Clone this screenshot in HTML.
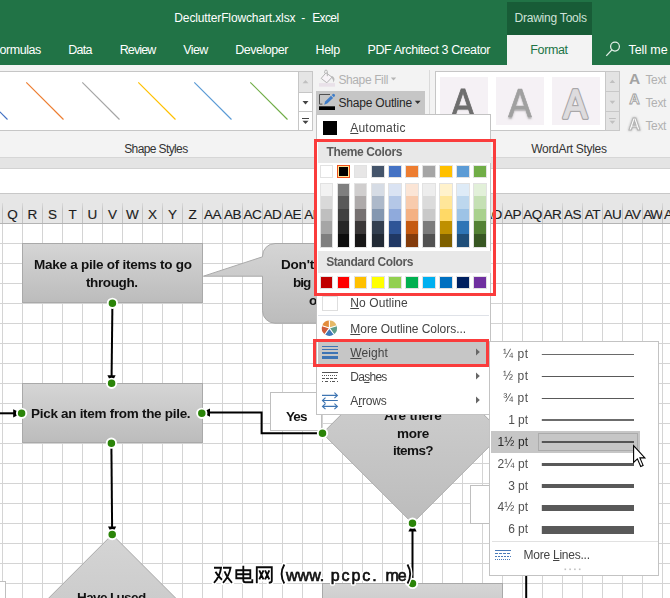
<!DOCTYPE html>
<html>
<head>
<meta charset="utf-8">
<style>
*{box-sizing:border-box;margin:0;padding:0}
html,body{width:670px;height:598px;overflow:hidden;background:#fff}
body{font-family:"Liberation Sans",sans-serif;font-size:12px;color:#262626;position:relative}
.a{position:absolute}
.t{position:absolute;white-space:nowrap;line-height:1}
svg{position:absolute;overflow:visible}
</style>
</head>
<body>
<div class="a" style="left:0px;top:0px;width:670px;height:65px;background:#217346;"></div>
<div class="a" style="left:0px;top:65px;width:670px;height:92px;background:#f3f3f3;"></div>
<div class="a" style="left:0px;top:157px;width:670px;height:11px;background:#e4e4e4;border-top:1px solid #d6d6d6;"></div>
<div class="a" style="left:0px;top:168px;width:670px;height:25px;background:#fff;border-top:1px solid #d2d2d2;"></div>
<div class="a" style="left:0px;top:193px;width:670px;height:31px;background:#e6e6e6;border-top:1px solid #c8c8c8;border-bottom:1px solid #b4b4b4;"></div>
<div class="a" style="left:0px;top:224px;width:670px;height:374px;background:#fff;background-image:linear-gradient(to right,#d4d4d4 1px,transparent 1px),linear-gradient(to bottom,#d4d4d4 1px,transparent 1px);background-size:20px 20px;background-position:2px -1px;"></div>
<div class="t" style="top:12.00px;font-size:12px;color:#fff;letter-spacing:-0.127px;left:174.30px;">DeclutterFlowchart.xlsx</div>
<div class="t" style="top:12.00px;font-size:12px;color:#fff;left:301.20px;">-</div>
<div class="t" style="top:12.00px;font-size:12px;color:#fff;letter-spacing:-0.609px;left:312.20px;">Excel</div>
<div class="a" style="left:507px;top:2px;width:85px;height:33px;background:#185c37;"></div>
<div class="t" style="top:12.00px;font-size:12px;color:#cfe2d7;letter-spacing:-0.220px;left:514.50px;">Drawing Tools</div>
<div class="a" style="left:507px;top:35px;width:85px;height:30px;background:#f3f3f3;"></div>
<div class="t" style="top:43.75px;font-size:12.5px;color:#217346;letter-spacing:-0.366px;left:530.30px;">Format</div>
<div class="t" style="top:43.75px;font-size:12.5px;color:#fff;letter-spacing:-0.438px;left:-0.50px;">ormulas</div>
<div class="t" style="top:43.75px;font-size:12.5px;color:#fff;letter-spacing:-0.702px;left:68.20px;">Data</div>
<div class="t" style="top:43.75px;font-size:12.5px;color:#fff;letter-spacing:-0.867px;left:119.70px;">Review</div>
<div class="t" style="top:43.75px;font-size:12.5px;color:#fff;letter-spacing:-0.644px;left:183.30px;">View</div>
<div class="t" style="top:43.75px;font-size:12.5px;color:#fff;letter-spacing:-0.476px;left:235.20px;">Developer</div>
<div class="t" style="top:43.75px;font-size:12.5px;color:#fff;letter-spacing:-0.305px;left:315.50px;">Help</div>
<div class="t" style="top:43.75px;font-size:12.5px;color:#fff;letter-spacing:-0.413px;left:367.50px;">PDF Architect 3 Creator</div>
<div class="t" style="top:43.75px;font-size:12.5px;color:#fff;letter-spacing:-0.099px;left:628.60px;">Tell me</div>
<svg style="left:603px;top:36px" width="20" height="22"><circle cx="12" cy="10.6" r="4.4" fill="none" stroke="#e3efe8" stroke-width="1.25"/><path d="M8.9 13.9L3.3 19.9" stroke="#e3efe8" stroke-width="1.3" fill="none"/></svg>
<div class="a" style="left:-5px;top:71px;width:304px;height:60px;background:#fff;border:1px solid #c6c6c6;"></div>
<svg style="left:0;top:0" width="320" height="135"><path d="M-29.7 82.3L7.5 119.5" stroke="#4472c4" stroke-width="1.15" fill="none"/><path d="M26.3 82.3L63.5 119.5" stroke="#ed7d31" stroke-width="1.15" fill="none"/><path d="M82.3 82.3L119.5 119.5" stroke="#a5a5a5" stroke-width="1.15" fill="none"/><path d="M138.3 82.3L175.5 119.5" stroke="#ffc000" stroke-width="1.15" fill="none"/><path d="M194.3 82.3L231.5 119.5" stroke="#5b9bd5" stroke-width="1.15" fill="none"/><path d="M250.3 82.3L287.5 119.5" stroke="#70ad47" stroke-width="1.15" fill="none"/></svg>
<div class="a" style="left:298px;top:71px;width:15px;height:22px;background:#e5e5e5;border:1px solid #c6c6c6;"></div>
<div class="a" style="left:298px;top:92px;width:15px;height:20px;background:#fff;border:1px solid #c6c6c6;"></div>
<div class="a" style="left:298px;top:111px;width:15px;height:20px;background:#fff;border:1px solid #c6c6c6;"></div>
<svg style="left:298px;top:71px" width="15" height="60"><path d="M4.6 12.3L7.5 9L10.4 12.3Z" fill="#c0c0c0"/><path d="M4.5 30L7.5 33.4L10.5 30Z" fill="#444"/><path d="M4 47.5H11" stroke="#444" stroke-width="1"/><path d="M4.5 49.7L7.5 53.1L10.5 49.7Z" fill="#444"/></svg>
<div class="t" style="top:143.00px;font-size:12px;color:#333;letter-spacing:-0.610px;left:124.20px;">Shape Styles</div>
<div class="t" style="top:74.00px;font-size:12px;color:#b1b1b1;letter-spacing:-0.377px;left:338.40px;">Shape Fill</div>
<svg style="left:316px;top:68px" width="22" height="20"><path d="M5.2 10.4L10 4.8L16 9.2L10.8 14.8Z" fill="#f8f4f8" stroke="#b4b4b4" stroke-width="1"/><path d="M8.7 5.2V3.4a1.3 1.3 0 0 1 2.6 0V8.2" stroke="#b4b4b4" stroke-width="1" fill="none"/><path d="M15.6 8C18.6 8.6 19.4 12 17.3 14.4C17.3 12 16.6 10.6 15 9.6Z" fill="#b9b9b9"/><rect x="3" y="15.1" width="16" height="3.6" fill="#e9e1e9"/></svg>
<svg style="left:390px;top:76px" width="8" height="6"><path d="M0.8 1.5L3.5 4.6L6.2 1.5Z" fill="#b5b5b5"/></svg>
<div class="a" style="left:316px;top:91px;width:109px;height:23px;background:#c6c6c6;"></div>
<div class="t" style="top:97.00px;font-size:12px;color:#262626;letter-spacing:-0.189px;left:338.40px;">Shape Outline</div>
<svg style="left:414px;top:99px" width="8" height="6"><path d="M0.8 1.7L3.7 5L6.6 1.7Z" fill="#333"/></svg>
<svg style="left:316px;top:91px" width="22" height="22"><path d="M14 3.5H3.5V13.1H6.4" stroke="#505050" stroke-width="1" fill="none"/><path d="M8.2 13.7L9.15 10.43L15 4.75L17.1 6.9L11.25 12.57Z" fill="#3f7dc9"/><path d="M15.7 4.05L16.6 3.2a1.5 1.5 0 0 1 2.1 2.1L17.8 6.2Z" fill="#3f7dc9"/><rect x="3" y="15.3" width="16" height="3.7" fill="#000"/></svg>
<div class="a" style="left:429px;top:70px;width:1px;height:84px;background:#dadada;"></div>
<div class="a" style="left:435px;top:71px;width:171px;height:60px;background:#fff;border:1px solid #c6c6c6;"></div>
<div class="a" style="left:440px;top:77px;width:48px;height:48px;background:#f5f1f5;"></div>
<div class="a" style="left:496px;top:77px;width:48px;height:48px;background:#f5f1f5;"></div>
<div class="a" style="left:552px;top:77px;width:48px;height:48px;background:#f5f1f5;"></div>
<div class="a" style="left:605px;top:71px;width:15px;height:21px;background:#e3e3e3;border:1px solid #c8c8c8;"></div>
<div class="a" style="left:605px;top:91px;width:15px;height:21px;background:#e3e3e3;border:1px solid #c8c8c8;"></div>
<div class="a" style="left:605px;top:111px;width:15px;height:20px;background:#e3e3e3;border:1px solid #c8c8c8;"></div>
<svg style="left:605px;top:71px" width="15" height="60"><path d="M4.6 12L7.4 8.8L10.2 12Z" fill="#c0c0c0"/><path d="M4.6 29.8L7.4 33L10.2 29.8Z" fill="#c0c0c0"/><path d="M4 47.5H10.8" stroke="#c0c0c0" stroke-width="1"/><path d="M4.6 49.7L7.4 52.9L10.2 49.7Z" fill="#c0c0c0"/></svg>
<div class="t" style="top:143.00px;font-size:12px;color:#333;letter-spacing:-0.322px;left:531.30px;">WordArt Styles</div>
<div class="t" style="left:449.06px;top:82.25px;font-size:41.5px;color:#6e6e6e;transform:scaleX(0.845);transform-origin:50% 50%;-webkit-text-stroke:0.9px #6e6e6e;text-shadow:0 1px 1.5px rgba(80,80,80,.4);">A</div>
<div class="t" style="left:506.06px;top:82.25px;font-size:41.5px;color:#a0a0a0;transform:scaleX(0.845);transform-origin:50% 50%;-webkit-text-stroke:0.7px #a0a0a0;text-shadow:0 2px 2px rgba(110,110,110,.5);">A</div>
<svg style="left:0;top:0" width="670" height="140"><g transform="translate(575.3,117.5) scale(0.852,1)" font-family="Liberation Sans" font-size="41.5" text-anchor="middle" stroke-linejoin="round"><text x="0" y="0" fill="none" stroke="#a9a7a9" stroke-width="4.1">A</text><text x="0" y="0" fill="#dedcde" stroke="#dedcde" stroke-width="1.5">A</text></g></svg>
<svg style="left:628px;top:70px" width="14" height="64"><text x="1" y="14" font-family="Liberation Sans" font-size="15.5" font-weight="700" fill="#a3a3a3">A</text><text x="1.2" y="34.3" font-family="Liberation Sans" font-size="14.5" font-weight="700" fill="#fbfbfb" stroke="#a0a0a0" stroke-width="0.9">A</text><text x="0.6" y="59.8" font-family="Liberation Sans" font-size="16.5" font-weight="700" fill="#fbfbfb" stroke="#b3b3b3" stroke-width="0.9" style="filter:drop-shadow(0 0 1.3px #aaa)">A</text></svg>
<div class="t" style="top:74.00px;font-size:12px;color:#b1b1b1;letter-spacing:-0.379px;left:645.50px;">Text</div>
<div class="t" style="top:97.00px;font-size:12px;color:#b1b1b1;letter-spacing:-0.379px;left:645.50px;">Text</div>
<div class="t" style="top:120.00px;font-size:12px;color:#b1b1b1;letter-spacing:-0.379px;left:645.50px;">Text</div>
<div class="a" style="left:2px;top:203px;width:1px;height:20px;background:linear-gradient(to bottom,#dcdcdc,#c2c2c2 35%,#c2c2c2);"></div>
<div class="t" style="left:7.24px;top:207.75px;font-size:13.5px;color:#1c1c1c;-webkit-text-stroke:0.15px #1c1c1c;letter-spacing:0.000px">Q</div>
<div class="a" style="left:22px;top:203px;width:1px;height:20px;background:linear-gradient(to bottom,#dcdcdc,#c2c2c2 35%,#c2c2c2);"></div>
<div class="t" style="left:27.62px;top:207.75px;font-size:13.5px;color:#1c1c1c;-webkit-text-stroke:0.15px #1c1c1c;letter-spacing:0.000px">R</div>
<div class="a" style="left:42px;top:203px;width:1px;height:20px;background:linear-gradient(to bottom,#dcdcdc,#c2c2c2 35%,#c2c2c2);"></div>
<div class="t" style="left:47.99px;top:207.75px;font-size:13.5px;color:#1c1c1c;-webkit-text-stroke:0.15px #1c1c1c;letter-spacing:0.000px">S</div>
<div class="a" style="left:62px;top:203px;width:1px;height:20px;background:linear-gradient(to bottom,#dcdcdc,#c2c2c2 35%,#c2c2c2);"></div>
<div class="t" style="left:68.38px;top:207.75px;font-size:13.5px;color:#1c1c1c;-webkit-text-stroke:0.15px #1c1c1c;letter-spacing:0.000px">T</div>
<div class="a" style="left:82px;top:203px;width:1px;height:20px;background:linear-gradient(to bottom,#dcdcdc,#c2c2c2 35%,#c2c2c2);"></div>
<div class="t" style="left:87.62px;top:207.75px;font-size:13.5px;color:#1c1c1c;-webkit-text-stroke:0.15px #1c1c1c;letter-spacing:0.000px">U</div>
<div class="a" style="left:102px;top:203px;width:1px;height:20px;background:linear-gradient(to bottom,#dcdcdc,#c2c2c2 35%,#c2c2c2);"></div>
<div class="t" style="left:107.99px;top:207.75px;font-size:13.5px;color:#1c1c1c;-webkit-text-stroke:0.15px #1c1c1c;letter-spacing:0.000px">V</div>
<div class="a" style="left:122px;top:203px;width:1px;height:20px;background:linear-gradient(to bottom,#dcdcdc,#c2c2c2 35%,#c2c2c2);"></div>
<div class="t" style="left:126.12px;top:207.75px;font-size:13.5px;color:#1c1c1c;-webkit-text-stroke:0.15px #1c1c1c;letter-spacing:0.000px">W</div>
<div class="a" style="left:142px;top:203px;width:1px;height:20px;background:linear-gradient(to bottom,#dcdcdc,#c2c2c2 35%,#c2c2c2);"></div>
<div class="t" style="left:147.99px;top:207.75px;font-size:13.5px;color:#1c1c1c;-webkit-text-stroke:0.15px #1c1c1c;letter-spacing:0.000px">X</div>
<div class="a" style="left:162px;top:203px;width:1px;height:20px;background:linear-gradient(to bottom,#dcdcdc,#c2c2c2 35%,#c2c2c2);"></div>
<div class="t" style="left:167.99px;top:207.75px;font-size:13.5px;color:#1c1c1c;-webkit-text-stroke:0.15px #1c1c1c;letter-spacing:0.000px">Y</div>
<div class="a" style="left:182px;top:203px;width:1px;height:20px;background:linear-gradient(to bottom,#dcdcdc,#c2c2c2 35%,#c2c2c2);"></div>
<div class="t" style="left:188.38px;top:207.75px;font-size:13.5px;color:#1c1c1c;-webkit-text-stroke:0.15px #1c1c1c;letter-spacing:0.000px">Z</div>
<div class="a" style="left:202px;top:203px;width:1px;height:20px;background:linear-gradient(to bottom,#dcdcdc,#c2c2c2 35%,#c2c2c2);"></div>
<div class="t" style="left:203.94px;top:207.75px;font-size:13.5px;color:#1c1c1c;-webkit-text-stroke:0.15px #1c1c1c;letter-spacing:-0.450px">AA</div>
<div class="a" style="left:222px;top:203px;width:1px;height:20px;background:linear-gradient(to bottom,#dcdcdc,#c2c2c2 35%,#c2c2c2);"></div>
<div class="t" style="left:223.94px;top:207.75px;font-size:13.5px;color:#1c1c1c;-webkit-text-stroke:0.15px #1c1c1c;letter-spacing:-0.450px">AB</div>
<div class="a" style="left:242px;top:203px;width:1px;height:20px;background:linear-gradient(to bottom,#dcdcdc,#c2c2c2 35%,#c2c2c2);"></div>
<div class="t" style="left:243.59px;top:207.75px;font-size:13.5px;color:#1c1c1c;-webkit-text-stroke:0.15px #1c1c1c;letter-spacing:-0.469px">AC</div>
<div class="a" style="left:262px;top:203px;width:1px;height:20px;background:linear-gradient(to bottom,#dcdcdc,#c2c2c2 35%,#c2c2c2);"></div>
<div class="t" style="left:263.59px;top:207.75px;font-size:13.5px;color:#1c1c1c;-webkit-text-stroke:0.15px #1c1c1c;letter-spacing:-0.469px">AD</div>
<div class="a" style="left:282px;top:203px;width:1px;height:20px;background:linear-gradient(to bottom,#dcdcdc,#c2c2c2 35%,#c2c2c2);"></div>
<div class="t" style="left:283.94px;top:207.75px;font-size:13.5px;color:#1c1c1c;-webkit-text-stroke:0.15px #1c1c1c;letter-spacing:-0.450px">AE</div>
<div class="a" style="left:302px;top:203px;width:1px;height:20px;background:linear-gradient(to bottom,#dcdcdc,#c2c2c2 35%,#c2c2c2);"></div>
<div class="t" style="left:304.30px;top:207.75px;font-size:13.5px;color:#1c1c1c;-webkit-text-stroke:0.15px #1c1c1c;letter-spacing:-0.432px">AF</div>
<div class="a" style="left:322px;top:203px;width:1px;height:20px;background:linear-gradient(to bottom,#dcdcdc,#c2c2c2 35%,#c2c2c2);"></div>
<div class="t" style="left:323.23px;top:207.75px;font-size:13.5px;color:#1c1c1c;-webkit-text-stroke:0.15px #1c1c1c;letter-spacing:-0.488px">AG</div>
<div class="a" style="left:342px;top:203px;width:1px;height:20px;background:linear-gradient(to bottom,#dcdcdc,#c2c2c2 35%,#c2c2c2);"></div>
<div class="t" style="left:343.59px;top:207.75px;font-size:13.5px;color:#1c1c1c;-webkit-text-stroke:0.15px #1c1c1c;letter-spacing:-0.469px">AH</div>
<div class="a" style="left:362px;top:203px;width:1px;height:20px;background:linear-gradient(to bottom,#dcdcdc,#c2c2c2 35%,#c2c2c2);"></div>
<div class="t" style="left:366.44px;top:207.75px;font-size:13.5px;color:#1c1c1c;-webkit-text-stroke:0.15px #1c1c1c;letter-spacing:-0.319px">AI</div>
<div class="a" style="left:382px;top:203px;width:1px;height:20px;background:linear-gradient(to bottom,#dcdcdc,#c2c2c2 35%,#c2c2c2);"></div>
<div class="t" style="left:385.01px;top:207.75px;font-size:13.5px;color:#1c1c1c;-webkit-text-stroke:0.15px #1c1c1c;letter-spacing:-0.394px">AJ</div>
<div class="a" style="left:402px;top:203px;width:1px;height:20px;background:linear-gradient(to bottom,#dcdcdc,#c2c2c2 35%,#c2c2c2);"></div>
<div class="t" style="left:403.94px;top:207.75px;font-size:13.5px;color:#1c1c1c;-webkit-text-stroke:0.15px #1c1c1c;letter-spacing:-0.450px">AK</div>
<div class="a" style="left:422px;top:203px;width:1px;height:20px;background:linear-gradient(to bottom,#dcdcdc,#c2c2c2 35%,#c2c2c2);"></div>
<div class="t" style="left:424.66px;top:207.75px;font-size:13.5px;color:#1c1c1c;-webkit-text-stroke:0.15px #1c1c1c;letter-spacing:-0.413px">AL</div>
<div class="a" style="left:442px;top:203px;width:1px;height:20px;background:linear-gradient(to bottom,#dcdcdc,#c2c2c2 35%,#c2c2c2);"></div>
<div class="t" style="left:443.20px;top:207.75px;font-size:13.5px;color:#1c1c1c;-webkit-text-stroke:0.15px #1c1c1c;letter-spacing:-0.825px">AM</div>
<div class="a" style="left:462px;top:203px;width:1px;height:20px;background:linear-gradient(to bottom,#dcdcdc,#c2c2c2 35%,#c2c2c2);"></div>
<div class="t" style="left:463.59px;top:207.75px;font-size:13.5px;color:#1c1c1c;-webkit-text-stroke:0.15px #1c1c1c;letter-spacing:-0.469px">AN</div>
<div class="a" style="left:482px;top:203px;width:1px;height:20px;background:linear-gradient(to bottom,#dcdcdc,#c2c2c2 35%,#c2c2c2);"></div>
<div class="t" style="left:483.23px;top:207.75px;font-size:13.5px;color:#1c1c1c;-webkit-text-stroke:0.15px #1c1c1c;letter-spacing:-0.488px">AO</div>
<div class="a" style="left:502px;top:203px;width:1px;height:20px;background:linear-gradient(to bottom,#dcdcdc,#c2c2c2 35%,#c2c2c2);"></div>
<div class="t" style="left:503.94px;top:207.75px;font-size:13.5px;color:#1c1c1c;-webkit-text-stroke:0.15px #1c1c1c;letter-spacing:-0.450px">AP</div>
<div class="a" style="left:522px;top:203px;width:1px;height:20px;background:linear-gradient(to bottom,#dcdcdc,#c2c2c2 35%,#c2c2c2);"></div>
<div class="t" style="left:523.23px;top:207.75px;font-size:13.5px;color:#1c1c1c;-webkit-text-stroke:0.15px #1c1c1c;letter-spacing:-0.488px">AQ</div>
<div class="a" style="left:542px;top:203px;width:1px;height:20px;background:linear-gradient(to bottom,#dcdcdc,#c2c2c2 35%,#c2c2c2);"></div>
<div class="t" style="left:543.59px;top:207.75px;font-size:13.5px;color:#1c1c1c;-webkit-text-stroke:0.15px #1c1c1c;letter-spacing:-0.469px">AR</div>
<div class="a" style="left:562px;top:203px;width:1px;height:20px;background:linear-gradient(to bottom,#dcdcdc,#c2c2c2 35%,#c2c2c2);"></div>
<div class="t" style="left:563.94px;top:207.75px;font-size:13.5px;color:#1c1c1c;-webkit-text-stroke:0.15px #1c1c1c;letter-spacing:-0.450px">AS</div>
<div class="a" style="left:582px;top:203px;width:1px;height:20px;background:linear-gradient(to bottom,#dcdcdc,#c2c2c2 35%,#c2c2c2);"></div>
<div class="t" style="left:584.78px;top:207.75px;font-size:13.5px;color:#1c1c1c;-webkit-text-stroke:0.15px #1c1c1c;letter-spacing:-0.406px">AT</div>
<div class="a" style="left:602px;top:203px;width:1px;height:20px;background:linear-gradient(to bottom,#dcdcdc,#c2c2c2 35%,#c2c2c2);"></div>
<div class="t" style="left:603.59px;top:207.75px;font-size:13.5px;color:#1c1c1c;-webkit-text-stroke:0.15px #1c1c1c;letter-spacing:-0.469px">AU</div>
<div class="a" style="left:622px;top:203px;width:1px;height:20px;background:linear-gradient(to bottom,#dcdcdc,#c2c2c2 35%,#c2c2c2);"></div>
<div class="t" style="left:624.42px;top:207.75px;font-size:13.5px;color:#1c1c1c;-webkit-text-stroke:0.15px #1c1c1c;letter-spacing:-0.425px">AV</div>
<div class="a" style="left:642px;top:203px;width:1px;height:20px;background:linear-gradient(to bottom,#dcdcdc,#c2c2c2 35%,#c2c2c2);"></div>
<div class="t" style="left:643.20px;top:207.75px;font-size:13.5px;color:#1c1c1c;-webkit-text-stroke:0.15px #1c1c1c;letter-spacing:-1.325px">AW</div>
<div class="a" style="left:662px;top:203px;width:1px;height:20px;background:linear-gradient(to bottom,#dcdcdc,#c2c2c2 35%,#c2c2c2);"></div>
<div class="t" style="left:663.94px;top:207.75px;font-size:13.5px;color:#1c1c1c;-webkit-text-stroke:0.15px #1c1c1c;letter-spacing:-0.450px">AX</div>
<div class="a" style="left:22px;top:243px;width:181px;height:60px;background:linear-gradient(to bottom,#d5d5d5,#bcbcbc);border:1px solid #a9a9a9;"></div>
<div class="t" style="top:257.75px;font-size:13.5px;color:#111;font-weight:700;letter-spacing:-0.253px;left:33.50px;will-change:transform;">Make a pile of items to go</div>
<div class="t" style="top:275.75px;font-size:13.5px;color:#111;font-weight:700;letter-spacing:-0.379px;left:86.20px;will-change:transform;">through.</div>
<div class="a" style="left:22px;top:383px;width:181px;height:60px;background:linear-gradient(to bottom,#d5d5d5,#bcbcbc);border:1px solid #a9a9a9;"></div>
<div class="t" style="top:406.75px;font-size:13.5px;color:#111;font-weight:700;letter-spacing:-0.296px;left:31.30px;will-change:transform;">Pick an item from the pile.</div>
<svg style="left:0;top:0" width="670" height="598"><defs><linearGradient id="g" x1="0" y1="0" x2="0" y2="1"><stop offset="0" stop-color="#d5d5d5"/><stop offset="1" stop-color="#bcbcbc"/></linearGradient></defs><path d="M262.5 256.8V256a12.5 12.5 0 0 1 12.5-12.5H340V323.2H275a12.5 12.5 0 0 1-12.5-12.5V276.2H203.4Z" fill="url(#g)" stroke="#a9a9a9" stroke-width="1"/><path d="M412.5 343.3L502.5 433.3L412.5 523.3L322.5 433.3Z" fill="url(#g)" stroke="#a9a9a9" stroke-width="1"/><path d="M112.2 534.6L202.2 624.6L112.2 714.6L22.2 624.6Z" fill="url(#g)" stroke="#a9a9a9" stroke-width="1"/></svg>
<div class="a" style="left:270px;top:392px;width:52px;height:39px;background:#fff;border:1px solid #bfbfbf;"></div>
<div class="t" style="top:409.75px;font-size:13.5px;color:#111;font-weight:700;letter-spacing:-0.894px;left:285.50px;will-change:transform;">Yes</div>
<div class="a" style="left:470px;top:485px;width:52px;height:39px;background:#fff;border:1px solid #bfbfbf;"></div>
<div class="a" style="left:-46px;top:581px;width:52px;height:39px;background:#fff;border:1px solid #bfbfbf;"></div>
<div class="a" style="left:322px;top:583px;width:181px;height:60px;background:linear-gradient(to bottom,#d5d5d5,#bcbcbc);border:1px solid #a9a9a9;"></div>
<div class="t" style="top:408.75px;font-size:13.5px;color:#111;font-weight:700;letter-spacing:-0.198px;left:383.50px;will-change:transform;">Are there</div>
<div class="t" style="top:426.75px;font-size:13.5px;color:#111;font-weight:700;letter-spacing:-0.254px;left:396.50px;will-change:transform;">more</div>
<div class="t" style="top:443.75px;font-size:13.5px;color:#111;font-weight:700;letter-spacing:-0.586px;left:392.50px;will-change:transform;">items?</div>
<div class="t" style="top:257.75px;font-size:13.5px;color:#111;font-weight:700;letter-spacing:-0.191px;left:280.80px;will-change:transform;">Don't</div>
<div class="t" style="top:275.75px;font-size:13.5px;color:#111;font-weight:700;letter-spacing:-0.983px;left:292.60px;will-change:transform;">big</div>
<div class="t" style="top:293.75px;font-size:13.5px;color:#111;font-weight:700;left:308.50px;will-change:transform;">o</div>
<div class="t" style="top:590.75px;font-size:13.5px;color:#111;font-weight:700;letter-spacing:-0.586px;left:77.40px;will-change:transform;">Have I used</div>
<svg style="left:0;top:0" width="670" height="598"><path d="M112.4 305L111.6 376" stroke="#000" stroke-width="2" fill="none"/><path d="M107.4 375.2H115.6L111.5 383.4Z" fill="#000"/><path d="M111.4 446L112.1 527" stroke="#000" stroke-width="2" fill="none"/><path d="M108 526.4H116.2L112.1 534.6Z" fill="#000"/><path d="M0 413.3H14" stroke="#000" stroke-width="2" fill="none"/><path d="M13.2 409.2V417.4L21.6 413.3Z" fill="#000"/><path d="M320 433.3H261.6V412.6H209" stroke="#000" stroke-width="2" fill="none"/><path d="M210 408.5V416.7L201.8 412.6Z" fill="#000"/><path d="M412.5 530V581" stroke="#000" stroke-width="2" fill="none"/><path d="M408.4 531.4H416.6L412.5 523.2Z" fill="#000"/><path d="M526.2 575V598" stroke="#000" stroke-width="2" fill="none"/><circle cx="112.4" cy="303.3" r="4.7" fill="#2a8408" stroke="#fff" stroke-width="1.9"/><circle cx="111.6" cy="383.3" r="4.7" fill="#2a8408" stroke="#fff" stroke-width="1.9"/><circle cx="21.6" cy="413.3" r="4.7" fill="#2a8408" stroke="#fff" stroke-width="1.9"/><circle cx="201.8" cy="413.3" r="4.7" fill="#2a8408" stroke="#fff" stroke-width="1.9"/><circle cx="111.4" cy="443.2" r="4.7" fill="#2a8408" stroke="#fff" stroke-width="1.9"/><circle cx="112.2" cy="534.6" r="4.7" fill="#2a8408" stroke="#fff" stroke-width="1.9"/><circle cx="322.5" cy="433.3" r="4.7" fill="#2a8408" stroke="#fff" stroke-width="1.9"/><circle cx="412.5" cy="523.2" r="4.7" fill="#2a8408" stroke="#fff" stroke-width="1.9"/><circle cx="412.5" cy="583.4" r="4.7" fill="#2a8408" stroke="#fff" stroke-width="1.9"/></svg>
<svg style="left:0;top:0" width="670" height="598"><g transform="translate(213.5,565.3) scale(1.0)"><path d="M0.5 2.5H7.5Q6.5 11 0.5 17.5M2 6.5Q4.5 11 8.5 14.5M9.5 2.5H17Q15.5 11 9.5 17.5M11 6Q13.5 12.5 18.5 17.5" stroke="#fff" stroke-width="4.6" fill="none" stroke-linecap="round" stroke-linejoin="round"/></g><g transform="translate(234.8,565.3) scale(1.0)"><path d="M1.5 5H15.5V13H1.5ZM1.5 9H15.5M8.5 0.5V15Q8.5 17 10.5 17H17.5V14" stroke="#fff" stroke-width="4.6" fill="none" stroke-linecap="round" stroke-linejoin="round"/></g><g transform="translate(255.3,565.3) scale(1.0)"><path d="M1.5 18V2H16.5V15.5Q16.5 17.5 13.5 17.5M4 5L8.2 14M8.2 5L4 14M9.8 5L14 14M14 5L9.8 14" stroke="#fff" stroke-width="4.6" fill="none" stroke-linecap="round" stroke-linejoin="round"/></g><g transform="translate(279.5,564.5) scale(1.0)"><path d="M4.8 0Q-0.6 9.5 4.8 19" stroke="#fff" stroke-width="4.6" fill="none" stroke-linecap="round" stroke-linejoin="round"/></g><g transform="translate(407.5,564.5) scale(1.0)"><path d="M0 0Q5.4 9.5 0 19" stroke="#fff" stroke-width="4.6" fill="none" stroke-linecap="round" stroke-linejoin="round"/></g><g transform="translate(213.5,565.3) scale(1.0)"><path d="M0.5 2.5H7.5Q6.5 11 0.5 17.5M2 6.5Q4.5 11 8.5 14.5M9.5 2.5H17Q15.5 11 9.5 17.5M11 6Q13.5 12.5 18.5 17.5" stroke="#0a0a0a" stroke-width="1.85" fill="none" stroke-linecap="butt" stroke-linejoin="miter"/></g><g transform="translate(234.8,565.3) scale(1.0)"><path d="M1.5 5H15.5V13H1.5ZM1.5 9H15.5M8.5 0.5V15Q8.5 17 10.5 17H17.5V14" stroke="#0a0a0a" stroke-width="1.85" fill="none" stroke-linecap="butt" stroke-linejoin="miter"/></g><g transform="translate(255.3,565.3) scale(1.0)"><path d="M1.5 18V2H16.5V15.5Q16.5 17.5 13.5 17.5M4 5L8.2 14M8.2 5L4 14M9.8 5L14 14M14 5L9.8 14" stroke="#0a0a0a" stroke-width="1.85" fill="none" stroke-linecap="butt" stroke-linejoin="miter"/></g><g transform="translate(279.5,564.5) scale(1.0)"><path d="M4.8 0Q-0.6 9.5 4.8 19" stroke="#0a0a0a" stroke-width="1.85" fill="none" stroke-linecap="butt" stroke-linejoin="miter"/></g><g transform="translate(407.5,564.5) scale(1.0)"><path d="M0 0Q5.4 9.5 0 19" stroke="#0a0a0a" stroke-width="1.85" fill="none" stroke-linecap="butt" stroke-linejoin="miter"/></g><text x="285.9" y="580.6" font-family="Liberation Sans" font-size="16" letter-spacing="0.066" fill="none" stroke="#fff" stroke-width="3.6" stroke-linejoin="round">www.</text><text x="285.9" y="580.6" font-family="Liberation Sans" font-size="16" letter-spacing="0.066" fill="#111" stroke="#111" stroke-width="0.65">www.</text><text x="330.8" y="580.6" font-family="Liberation Sans" font-size="16" letter-spacing="1.910" fill="none" stroke="#fff" stroke-width="3.6" stroke-linejoin="round">pcpc.</text><text x="330.8" y="580.6" font-family="Liberation Sans" font-size="16" letter-spacing="1.910" fill="#111" stroke="#111" stroke-width="0.65">pcpc.</text><text x="385.5" y="580.6" font-family="Liberation Sans" font-size="16" letter-spacing="-1.167" fill="none" stroke="#fff" stroke-width="3.6" stroke-linejoin="round">me</text><text x="385.5" y="580.6" font-family="Liberation Sans" font-size="16" letter-spacing="-1.167" fill="#111" stroke="#111" stroke-width="0.65">me</text></svg>
<div class="a" style="left:316px;top:114px;width:175px;height:301px;background:#fff;border:1px solid #c3c3c3;"></div>
<div class="a" style="left:323px;top:121px;width:14px;height:14px;background:#000;"></div>
<div class="t" style="top:122.00px;font-size:12px;color:#444;letter-spacing:0.238px;left:350.20px;"><u>A</u>utomatic</div>
<div class="a" style="left:318px;top:142px;width:173px;height:20.5px;background:#e8e8e8;"></div>
<div class="t" style="top:146.00px;font-size:12px;color:#5a5a5a;font-weight:700;letter-spacing:-0.368px;left:326.50px;">Theme Colors</div>
<svg style="left:0;top:0" width="670" height="598" shape-rendering="crispEdges"><rect x="320.00" y="165.3" width="12.8" height="12.2" fill="#ffffff" stroke="#e2e2e2" stroke-width="1"/><rect x="319.50" y="182.6" width="13.8" height="65.1" fill="#e2e2e2"/><rect x="320.50" y="183.60" width="11.8" height="12.7" fill="#f2f2f2"/><rect x="320.50" y="196.22" width="11.8" height="12.7" fill="#d9d9d9"/><rect x="320.50" y="208.84" width="11.8" height="12.7" fill="#bfbfbf"/><rect x="320.50" y="221.46" width="11.8" height="12.7" fill="#a6a6a6"/><rect x="320.50" y="234.08" width="11.8" height="12.7" fill="#7f7f7f"/><rect x="320.00" y="276.6" width="12.8" height="12" fill="#c00000" stroke="#e2e2e2" stroke-width="1"/><rect x="337.08" y="165.3" width="12.8" height="12.2" fill="#000000" stroke="#e2e2e2" stroke-width="1"/><rect x="336.58" y="182.6" width="13.8" height="65.1" fill="#e2e2e2"/><rect x="337.58" y="183.60" width="11.8" height="12.7" fill="#7f7f7f"/><rect x="337.58" y="196.22" width="11.8" height="12.7" fill="#595959"/><rect x="337.58" y="208.84" width="11.8" height="12.7" fill="#404040"/><rect x="337.58" y="221.46" width="11.8" height="12.7" fill="#262626"/><rect x="337.58" y="234.08" width="11.8" height="12.7" fill="#0d0d0d"/><rect x="337.08" y="276.6" width="12.8" height="12" fill="#ff0000" stroke="#e2e2e2" stroke-width="1"/><rect x="354.16" y="165.3" width="12.8" height="12.2" fill="#e7e6e6" stroke="#e2e2e2" stroke-width="1"/><rect x="353.66" y="182.6" width="13.8" height="65.1" fill="#e2e2e2"/><rect x="354.66" y="183.60" width="11.8" height="12.7" fill="#d0cece"/><rect x="354.66" y="196.22" width="11.8" height="12.7" fill="#aeaaaa"/><rect x="354.66" y="208.84" width="11.8" height="12.7" fill="#767171"/><rect x="354.66" y="221.46" width="11.8" height="12.7" fill="#3b3838"/><rect x="354.66" y="234.08" width="11.8" height="12.7" fill="#181717"/><rect x="354.16" y="276.6" width="12.8" height="12" fill="#ffc000" stroke="#e2e2e2" stroke-width="1"/><rect x="371.24" y="165.3" width="12.8" height="12.2" fill="#44546a" stroke="#e2e2e2" stroke-width="1"/><rect x="370.74" y="182.6" width="13.8" height="65.1" fill="#e2e2e2"/><rect x="371.74" y="183.60" width="11.8" height="12.7" fill="#d6dce5"/><rect x="371.74" y="196.22" width="11.8" height="12.7" fill="#adb9ca"/><rect x="371.74" y="208.84" width="11.8" height="12.7" fill="#8497b0"/><rect x="371.74" y="221.46" width="11.8" height="12.7" fill="#333f50"/><rect x="371.74" y="234.08" width="11.8" height="12.7" fill="#222a35"/><rect x="371.24" y="276.6" width="12.8" height="12" fill="#ffff00" stroke="#e2e2e2" stroke-width="1"/><rect x="388.32" y="165.3" width="12.8" height="12.2" fill="#4472c4" stroke="#e2e2e2" stroke-width="1"/><rect x="387.82" y="182.6" width="13.8" height="65.1" fill="#e2e2e2"/><rect x="388.82" y="183.60" width="11.8" height="12.7" fill="#dae3f3"/><rect x="388.82" y="196.22" width="11.8" height="12.7" fill="#b4c7e7"/><rect x="388.82" y="208.84" width="11.8" height="12.7" fill="#8faadc"/><rect x="388.82" y="221.46" width="11.8" height="12.7" fill="#2f5597"/><rect x="388.82" y="234.08" width="11.8" height="12.7" fill="#203864"/><rect x="388.32" y="276.6" width="12.8" height="12" fill="#92d050" stroke="#e2e2e2" stroke-width="1"/><rect x="405.40" y="165.3" width="12.8" height="12.2" fill="#ed7d31" stroke="#e2e2e2" stroke-width="1"/><rect x="404.90" y="182.6" width="13.8" height="65.1" fill="#e2e2e2"/><rect x="405.90" y="183.60" width="11.8" height="12.7" fill="#fbe5d6"/><rect x="405.90" y="196.22" width="11.8" height="12.7" fill="#f8cbad"/><rect x="405.90" y="208.84" width="11.8" height="12.7" fill="#f4b183"/><rect x="405.90" y="221.46" width="11.8" height="12.7" fill="#c55a11"/><rect x="405.90" y="234.08" width="11.8" height="12.7" fill="#843c0c"/><rect x="405.40" y="276.6" width="12.8" height="12" fill="#00b050" stroke="#e2e2e2" stroke-width="1"/><rect x="422.48" y="165.3" width="12.8" height="12.2" fill="#a5a5a5" stroke="#e2e2e2" stroke-width="1"/><rect x="421.98" y="182.6" width="13.8" height="65.1" fill="#e2e2e2"/><rect x="422.98" y="183.60" width="11.8" height="12.7" fill="#ededed"/><rect x="422.98" y="196.22" width="11.8" height="12.7" fill="#dbdbdb"/><rect x="422.98" y="208.84" width="11.8" height="12.7" fill="#c9c9c9"/><rect x="422.98" y="221.46" width="11.8" height="12.7" fill="#7c7c7c"/><rect x="422.98" y="234.08" width="11.8" height="12.7" fill="#525252"/><rect x="422.48" y="276.6" width="12.8" height="12" fill="#00b0f0" stroke="#e2e2e2" stroke-width="1"/><rect x="439.56" y="165.3" width="12.8" height="12.2" fill="#ffc000" stroke="#e2e2e2" stroke-width="1"/><rect x="439.06" y="182.6" width="13.8" height="65.1" fill="#e2e2e2"/><rect x="440.06" y="183.60" width="11.8" height="12.7" fill="#fff2cc"/><rect x="440.06" y="196.22" width="11.8" height="12.7" fill="#ffe699"/><rect x="440.06" y="208.84" width="11.8" height="12.7" fill="#ffd966"/><rect x="440.06" y="221.46" width="11.8" height="12.7" fill="#bf9000"/><rect x="440.06" y="234.08" width="11.8" height="12.7" fill="#7f6000"/><rect x="439.56" y="276.6" width="12.8" height="12" fill="#0070c0" stroke="#e2e2e2" stroke-width="1"/><rect x="456.64" y="165.3" width="12.8" height="12.2" fill="#5b9bd5" stroke="#e2e2e2" stroke-width="1"/><rect x="456.14" y="182.6" width="13.8" height="65.1" fill="#e2e2e2"/><rect x="457.14" y="183.60" width="11.8" height="12.7" fill="#deebf7"/><rect x="457.14" y="196.22" width="11.8" height="12.7" fill="#bdd7ee"/><rect x="457.14" y="208.84" width="11.8" height="12.7" fill="#9dc3e6"/><rect x="457.14" y="221.46" width="11.8" height="12.7" fill="#2e75b6"/><rect x="457.14" y="234.08" width="11.8" height="12.7" fill="#1f4e79"/><rect x="456.64" y="276.6" width="12.8" height="12" fill="#002060" stroke="#e2e2e2" stroke-width="1"/><rect x="473.72" y="165.3" width="12.8" height="12.2" fill="#70ad47" stroke="#e2e2e2" stroke-width="1"/><rect x="473.22" y="182.6" width="13.8" height="65.1" fill="#e2e2e2"/><rect x="474.22" y="183.60" width="11.8" height="12.7" fill="#e2f0d9"/><rect x="474.22" y="196.22" width="11.8" height="12.7" fill="#c5e0b4"/><rect x="474.22" y="208.84" width="11.8" height="12.7" fill="#a9d18e"/><rect x="474.22" y="221.46" width="11.8" height="12.7" fill="#548235"/><rect x="474.22" y="234.08" width="11.8" height="12.7" fill="#385723"/><rect x="473.72" y="276.6" width="12.8" height="12" fill="#7030a0" stroke="#e2e2e2" stroke-width="1"/><rect x="337" y="165" width="13" height="13" fill="#f0531f"/><rect x="338" y="166" width="11" height="11" fill="#ffe391"/><rect x="339" y="167" width="9" height="9" fill="#000"/></svg>
<div class="a" style="left:318px;top:251px;width:173px;height:22px;background:#e8e8e8;"></div>
<div class="t" style="top:256.00px;font-size:12px;color:#5a5a5a;font-weight:700;letter-spacing:-0.437px;left:326.20px;">Standard Colors</div>
<div class="a" style="left:314px;top:139px;width:182px;height:157px;border:3px solid #fa3c3c;"></div>
<div class="a" style="left:322px;top:296px;width:16px;height:15px;background:#fff;border:1px solid #dedede;"></div>
<div class="t" style="top:297.00px;font-size:12px;color:#444;letter-spacing:0.080px;left:350.30px;"><u>N</u>o Outline</div>
<div class="a" style="left:318px;top:315px;width:171px;height:1px;background:#dfe2e8;"></div>
<div class="t" style="top:323.00px;font-size:12px;color:#444;letter-spacing:-0.046px;left:350.30px;"><u>M</u>ore Outline Colors...</div>
<svg style="left:320px;top:320px" width="18" height="18"><g transform="translate(9.4,8.1) scale(0.95)"><path d="M0 0L0 -8A8 8 0 0 1 7.6 -2.5Z" fill="#e6b968"/><path d="M0 0L7.6 -2.5A8 8 0 0 1 4.7 6.5Z" fill="#5f9e8a"/><path d="M0 0L4.7 6.5A8 8 0 0 1 -4.7 6.5Z" fill="#3f78b8"/><path d="M0 0L-4.7 6.5A8 8 0 0 1 -7.6 -2.5Z" fill="#cf5c3b"/><path d="M0 0L-7.6 -2.5A8 8 0 0 1 0 -8Z" fill="#e38c3b"/><path d="M0 0V-8M0 0L7.6 -2.5M0 0L4.7 6.5M0 0L-4.7 6.5M0 0L-7.6 -2.5" stroke="#fff" stroke-width="1.1"/></g></svg>
<div class="a" style="left:318px;top:342px;width:171px;height:22px;background:#c6c6c6;"></div>
<div class="a" style="left:313px;top:339px;width:176px;height:28px;border:3px solid #fa3c3c;"></div>
<div class="t" style="top:347.00px;font-size:12px;color:#444;letter-spacing:0.093px;left:350.30px;"><u>W</u>eight</div>
<svg style="left:321px;top:343px" width="18" height="18" shape-rendering="crispEdges"><rect x="1" y="3" width="15.5" height="1" fill="#3d74b5"/><rect x="1" y="6" width="15.5" height="1" fill="#3d74b5"/><rect x="1" y="9" width="15.5" height="2" fill="#3d74b5"/><rect x="1" y="13" width="15.5" height="3" fill="#3d74b5"/></svg>
<div class="t" style="top:371.00px;font-size:12px;color:#444;letter-spacing:-0.731px;left:350.30px;">Da<u>s</u>hes</div>
<div class="t" style="top:395.00px;font-size:12px;color:#444;letter-spacing:-0.174px;left:350.30px;">A<u>r</u>rows</div>
<svg style="left:475px;top:348.4px" width="6" height="8"><path d="M1 0.5L4.8 4L1 7.5Z" fill="#666"/></svg>
<svg style="left:475px;top:372.4px" width="6" height="8"><path d="M1 0.5L4.8 4L1 7.5Z" fill="#666"/></svg>
<svg style="left:475px;top:396.4px" width="6" height="8"><path d="M1 0.5L4.8 4L1 7.5Z" fill="#666"/></svg>
<svg style="left:321px;top:368px" width="18" height="16" shape-rendering="crispEdges"><g stroke="#555" stroke-width="1" fill="none"><path d="M1 4.5H16.5"/><path d="M1 7.5H17" stroke-dasharray="1 1.07"/><path d="M1 10.5H17" stroke-dasharray="3 1"/><path d="M1 13.5H17" stroke-dasharray="1 1.75 3 1.75"/></g></svg>
<svg style="left:321px;top:390px" width="18" height="22"><g stroke="#3e75b2" stroke-width="1.15" fill="none"><path d="M1 5.4H16.3M13.4 2.6L16.4 5.4L13.4 8.2"/><path d="M16.8 10.5H1.6M4.5 7.7L1.5 10.5L4.5 13.3"/><path d="M1.6 16.4H16.3M4.5 13.6L1.5 16.4L4.5 19.2M13.4 13.6L16.4 16.4L13.4 19.2"/></g></svg>
<div class="a" style="left:489px;top:341px;width:170px;height:235px;background:#fff;border:1px solid #c3c3c3;"></div>
<div class="a" style="left:491px;top:431px;width:149px;height:22px;background:#c6c6c6;"></div>
<div class="a" style="left:538px;top:433px;width:100px;height:18px;background:#c6c6c6;border:1px solid #ababab;"></div>
<svg style="left:0;top:0" width="670" height="598"><rect x="541.8" y="354" width="92.2" height="1" fill="#6a6a6a"/><rect x="541.8" y="376" width="92.2" height="1" fill="#595959"/><rect x="541.8" y="398" width="92.2" height="1" fill="#595959"/><rect x="541.8" y="419" width="92.2" height="2" fill="#6c6c6c"/><rect x="541.8" y="441" width="92.2" height="2" fill="#555"/><rect x="541.8" y="463" width="92.2" height="3" fill="#595959"/><rect x="541.8" y="484" width="92.2" height="4" fill="#595959"/><rect x="541.8" y="505" width="92.2" height="6" fill="#595959"/><rect x="541.8" y="526" width="92.2" height="8" fill="#595959"/></svg>
<div class="t" style="top:348.00px;font-size:12px;color:#505050;letter-spacing:0.535px;right:141.46px;">¼ pt</div>
<div class="t" style="top:370.00px;font-size:12px;color:#505050;letter-spacing:0.535px;right:141.46px;">½ pt</div>
<div class="t" style="top:392.00px;font-size:12px;color:#505050;letter-spacing:0.535px;right:141.46px;">¾ pt</div>
<div class="t" style="top:414.00px;font-size:12px;color:#505050;letter-spacing:-0.054px;right:142.05px;">1 pt</div>
<div class="t" style="top:436.00px;font-size:12px;color:#262626;letter-spacing:0.114px;right:141.89px;">1½ pt</div>
<div class="t" style="top:458.00px;font-size:12px;color:#505050;letter-spacing:0.114px;right:141.89px;">2¼ pt</div>
<div class="t" style="top:480.00px;font-size:12px;color:#505050;letter-spacing:-0.054px;right:142.05px;">3 pt</div>
<div class="t" style="top:501.00px;font-size:12px;color:#505050;letter-spacing:0.114px;right:141.89px;">4½ pt</div>
<div class="t" style="top:523.00px;font-size:12px;color:#505050;letter-spacing:-0.054px;right:142.05px;">6 pt</div>
<div class="a" style="left:492px;top:541px;width:166px;height:1px;background:#e1e1e1;"></div>
<div class="t" style="top:549.00px;font-size:12px;color:#444;letter-spacing:-0.237px;left:523.50px;">More <u>L</u>ines...</div>
<svg style="left:494px;top:548px" width="18" height="14"><g stroke="#4a7ab8" stroke-width="1" fill="none"><path d="M1 2.5H17"/><path d="M1 5.5H17" stroke-dasharray="3 1"/><path d="M1 8.5H17" stroke-dasharray="2 1"/><path d="M1 11.5H17" stroke-dasharray="1 1"/></g></svg>
<svg style="left:564px;top:567px" width="20" height="5"><g fill="#c0c0c0"><rect x="0.5" y="1.5" width="1.6" height="1.6"/><rect x="5.3" y="1.5" width="1.6" height="1.6"/><rect x="10.1" y="1.5" width="1.6" height="1.6"/><rect x="14.9" y="1.5" width="1.6" height="1.6"/></g></svg>
<svg style="left:632px;top:444px" width="16" height="24"><path d="M1.6 1.6V18.5L5.4 14.9L8.7 22.5L11.1 21.4L7.9 13.9H12.9Z" fill="#fff" stroke="#000" stroke-width="1.1" stroke-linejoin="miter"/></svg>
</body>
</html>
